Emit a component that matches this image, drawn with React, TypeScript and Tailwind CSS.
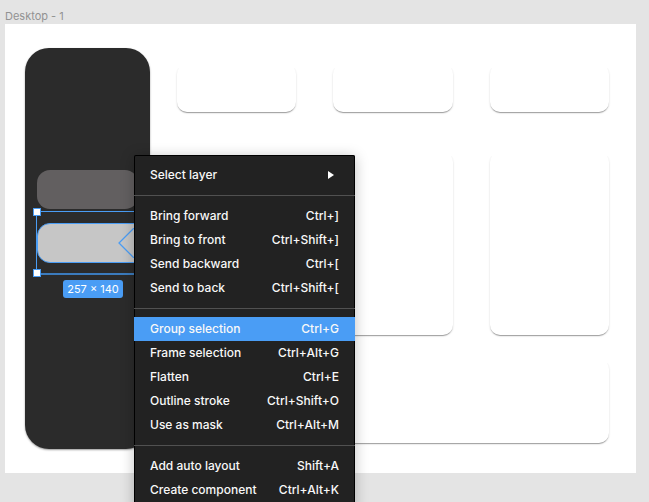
type Item = { label: string; keys?: string; submenu?: boolean; active?: boolean };

const groups: Item[][] = [
  [{ label: "Select layer", submenu: true }],
  [
    { label: "Bring forward", keys: "Ctrl+]" },
    { label: "Bring to front", keys: "Ctrl+Shift+]" },
    { label: "Send backward", keys: "Ctrl+[" },
    { label: "Send to back", keys: "Ctrl+Shift+[" },
  ],
  [
    { label: "Group selection", keys: "Ctrl+G", active: true },
    { label: "Frame selection", keys: "Ctrl+Alt+G" },
    { label: "Flatten", keys: "Ctrl+E" },
    { label: "Outline stroke", keys: "Ctrl+Shift+O" },
    { label: "Use as mask", keys: "Ctrl+Alt+M" },
  ],
  [
    { label: "Add auto layout", keys: "Shift+A" },
    { label: "Create component", keys: "Ctrl+Alt+K" },
  ],
];

function MenuItem({ item }: { item: Item }) {
  return (
    <button
      type="button"
      role="menuitem"
      className={`flex h-6 w-full items-center justify-between px-4 text-left ${item.active ? "bg-[#4a9df5]" : ""}`}
    >
      <span>{item.label}</span>
      {item.keys && <span>{item.keys}</span>}
      {item.submenu && (
        <svg className="mr-1 h-2 w-2" viewBox="0 0 8 8" aria-hidden="true">
          <path d="M1 0 L7 4 L1 8 Z" fill="white" />
        </svg>
      )}
    </button>
  );
}

function ContextMenu() {
  return (
    <div
      role="menu"
      className="absolute left-[134px] top-[155px] w-[221px] rounded-xs bg-[#222222] text-xs font-medium text-[#f8f8f8] shadow-[inset_0_0_0_1px_#000,0_2px_14px_rgba(0,0,0,0.25)]"
    >
      {groups.map((items, i) => (
        <div key={i} className={`py-2 ${i > 0 ? "border-t border-[#515151]" : ""}`}>
          {items.map((item) => (
            <MenuItem key={item.label} item={item} />
          ))}
        </div>
      ))}
    </div>
  );
}

function Card({ className }: { className: string }) {
  return (
    <div
      className={`rounded-[10px] bg-white shadow-[0_1px_2px_rgba(0,0,0,0.18),0_2px_1px_-1px_rgba(0,0,0,0.2),0_1px_0_rgba(0,0,0,0.08)] [clip-path:inset(4px_-3px_-4px_-3px)] ${className}`}
    />
  );
}

const handle = "absolute h-2 w-2 border border-[#4a9df5] bg-white";

function Sidebar() {
  return (
    <div className="relative h-[401px] w-[125px] shrink-0 rounded-3xl bg-[#2b2b2b] px-3 pt-[122px] shadow-[0_1px_2px_rgba(0,0,0,0.4)]">
      <div className="h-[39px] rounded-[13px] bg-[#625f60]" />
      <div className="relative mt-[14px] h-10 overflow-hidden rounded-l-[13px] border border-[#4a9df5] bg-[#c6c6c6]">
        <svg className="absolute right-0 top-1 h-[30px] w-[19px]" viewBox="0 0 19 30" fill="none" aria-hidden="true">
          <path d="M16 0 L1 15 L16 30" stroke="#4a9df5" strokeWidth="1.3" />
        </svg>
      </div>
      <div className="absolute left-[11px] top-[163px] h-[64px] w-[120px] border border-b-2 border-[#4a9df5] border-b-[#3b7bbd]">
        <span className={`${handle} -left-1 -top-1`} />
        <span className={`${handle} -bottom-1 -left-1`} />
      </div>
      <div className="absolute left-[38px] top-[232px] flex h-[18px] w-15 items-center justify-center whitespace-nowrap rounded-[3px] bg-[#4a9df5] text-[11px] text-white">
        257 × 140
      </div>
    </div>
  );
}

export default function App() {
  return (
    <div className="relative h-screen overflow-hidden bg-[#e4e4e4] pl-[5px] pr-[13px] pt-2 font-['Inter',sans-serif]">
      <h1 className="h-4 text-[11px] leading-4 text-[#929292]">Desktop - 1</h1>
      <main className="flex bg-white py-6 pl-5 pr-[27px]">
        <Sidebar />
        <div className="ml-[27px] grid flex-1 grid-cols-3 content-start gap-x-[37px] pt-4">
          <Card className="mb-10 h-12" />
          <Card className="mb-10 h-12" />
          <Card className="mb-10 h-12" />
          <Card className="mb-6 h-[183px]" />
          <Card className="mb-6 h-[183px]" />
          <Card className="mb-6 h-[183px]" />
          <Card className="col-span-3 h-[84px]" />
        </div>
      </main>
      <ContextMenu />
    </div>
  );
}
